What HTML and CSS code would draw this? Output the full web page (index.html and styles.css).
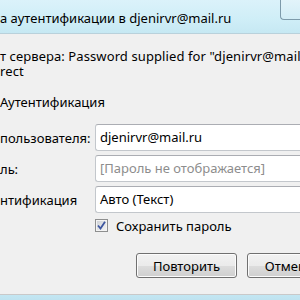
FILE: index.html
```html
<!DOCTYPE html>
<html lang="ru">
<head>
<meta charset="utf-8">
<title>Настройка аутентификации</title>
<link rel="stylesheet" href="styles.css">
</head>
<body>
<div class="window">
  <div class="titlebar">
    <span class="title">а аутентификации в djenirvr@mail.ru</span>
    <span class="close"></span>
  </div>
  <div class="content">
    <p class="message">т сервера: Password supplied for "djenirvr@mail.ru<br>rect</p>
    <p class="group">Аутентификация</p>
    <div class="form">
      <label class="label">пользователя:</label>
      <div class="field">djenirvr@mail.ru</div>
      <label class="label">ль:</label>
      <div class="field placeholder">[Пароль не отображается]</div>
      <label class="label">нтификация</label>
      <div class="field select">Авто (Текст)</div>
      <span></span>
      <label class="check-row"><span class="checkbox"><svg viewBox="0 0 9 9" width="9" height="9"><path d="M1 4.5 L3.5 7.5 L8 0.8" fill="none" stroke="#3d56a0" stroke-width="1.8"/></svg></span>Сохранить пароль</label>
    </div>
    <div class="buttons">
      <button class="btn">Повторить</button>
      <button class="btn btn-cancel">Отмена</button>
    </div>
  </div>
  <div class="frame-bottom"></div>
</div>
</body>
</html>
```
FILE: styles.css
```css
* { box-sizing: border-box; }
html, body { margin: 0; padding: 0; }
body {
  width: 300px;
  height: 300px;
  overflow: hidden;
  font-family: "Noto Sans", "Open Sans", sans-serif;
  font-size: 13px;
  color: #000;
  background: #f0f0f0;
}
.window {
  width: 300px;
  height: 300px;
  display: flex;
  flex-direction: column;
  overflow: hidden;
}
.titlebar {
  height: 34px;
  flex: none;
  display: flex;
  justify-content: space-between;
  align-items: flex-start;
  background: linear-gradient(#dbf2fa, #cfeef7 60%, #c6e8f3);
  border-bottom: 1px solid #b9d1db;
}
.title {
  line-height: 15px;
  padding-top: 11px;
  font-size: 13px;
  white-space: nowrap;
}
.close {
  width: 20px;
  height: 21px;
  margin-top: -1px;
  flex: none;
  border: 1px solid #7d9aaa;
  border-right: none;
  border-top: none;
  border-bottom-left-radius: 4px;
  background: linear-gradient(#e3f4fa, #d2edf6);
}
.content {
  flex: 1;
  padding-top: 15px;
  overflow: hidden;
  border-bottom: 1px solid #c9c9c9;
}
.message {
  margin: 0;
  line-height: 15px;
  white-space: nowrap;
  letter-spacing: 0.1px;
}
.group {
  margin: 16px 0 0;
  line-height: 15px;
}
.form {
  margin-top: 14px;
  display: grid;
  grid-template-columns: 95px 1fr;
  row-gap: 4px;
  align-items: center;
}
.label {
  white-space: nowrap;
}
.field {
  height: 27px;
  line-height: 25px;
  padding-left: 4px;
  background: #fff;
  border: 1px solid #c3c7cc;
  border-top-color: #abadb3;
  border-right: none;
  border-radius: 3px 0 0 3px;
  white-space: nowrap;
}
.placeholder { color: #8d8d8d; }
.check-row {
  display: flex;
  align-items: center;
  gap: 8px;
  height: 17px;
}
.checkbox {
  width: 13px;
  height: 13px;
  border: 1px solid #8e8f8f;
  background: linear-gradient(135deg, #cbcfd5, #f6f6f6);
  display: flex;
  align-items: center;
  justify-content: center;
  box-shadow: inset 0 0 0 1px #f4f4f4;
}
.buttons {
  margin-top: 19px;
  display: flex;
  gap: 10px;
  padding-left: 136px;
}
.btn {
  flex: none;
  width: 101px;
  height: 25px;
  font: inherit;
  color: #000;
  border: 1px solid #707070;
  border-radius: 3px;
  background: linear-gradient(#f2f2f2, #ebebeb 50%, #dddddd 51%, #cfcfcf);
  box-shadow: inset 0 0 0 1px #fcfcfc;
  padding: 0;
}
.btn-cancel { width: 84px; }
.frame-bottom {
  height: 5px;
  flex: none;
  background: linear-gradient(#c3e6f2, #bfe3f0);
}
```
